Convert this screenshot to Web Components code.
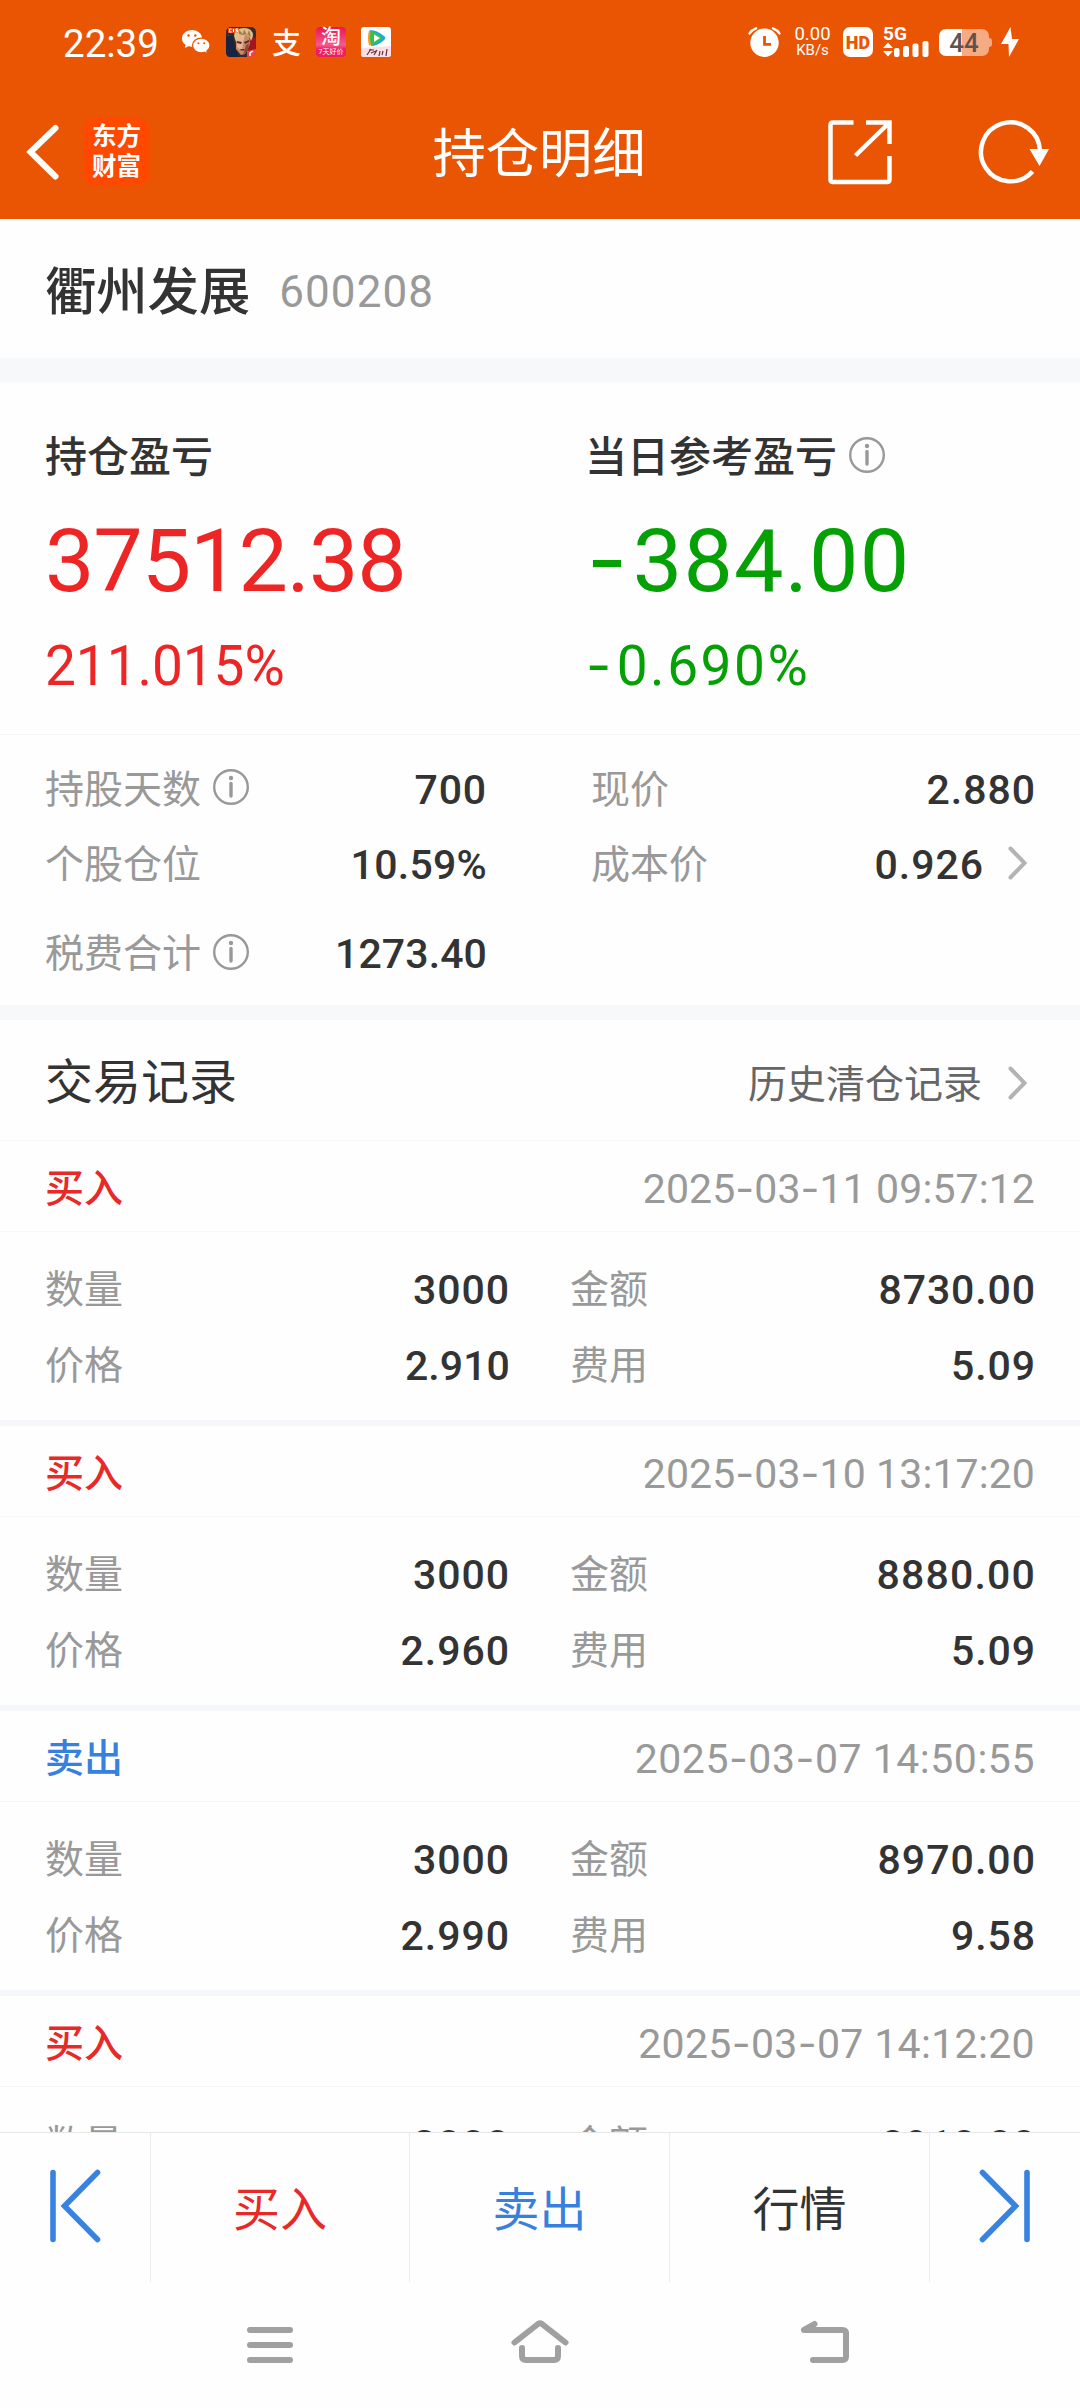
<!DOCTYPE html>
<html lang="zh-CN">
<head>
<meta charset="UTF-8">
<meta name="viewport" content="width=1080">
<title>持仓明细</title>
<style>
  body {
    margin: 0;
    width: 1080px;
    height: 2408px;
    overflow: hidden;
    background: #fefefe;
    color: #333;
    font-family: Roboto, "Noto Sans CJK SC", sans-serif;
  }
</style>
</head>
<body>
<position-page></position-page>

<script>
// the short dash of Roboto is swapped for a wider one in numbers and dates
function num(text) {
  return text.replace(/-/g, '<span class="dash">-</span>');
}
const dashStyle = `.dash { font-family: Inter, sans-serif; line-height: 0; }`;

// Roboto digits all have one width: numbers with many 1s are set tighter
function tracking(text, base) {
  const ones = (text.match(/1/g) || []).length;
  const narrow = (text.match(/[2357]/g) || []).length;
  return (base - (ones * 0.11 + narrow * 0.025) / text.length).toFixed(4) + "em";
}

class StatusBar extends HTMLElement {
  constructor() {
    super();
    this.attachShadow({ mode: "open" }).innerHTML = `
      <style>
        :host {
          display: flex;
          justify-content: space-between;
          align-items: center;
          height: 84px;
          padding: 0 61px 0 63px;
          box-sizing: border-box;
          color: #fff;
        }
        .side { display: flex; align-items: center; }
        .time { font-size: 38.500px; line-height: 46px; padding-top: 4px; width: 97px; }
        svg { display: block; }
        .left svg { margin-left: 15px; }
        .wechat { margin-left: 22px !important; }
        .pay {
          width: 30px;
          margin-left: 16px;
          font-size: 29px;
          line-height: 42px;
          font-weight: 500;
          padding-top: 3px;
        }
        .tile {
          width: 30px;
          height: 30px;
          margin-left: 14px;
          border-radius: 4px;
          text-align: center;
          background: linear-gradient(#e91550, #f65a8c 60%, #ef1d62 74%);
        }
        .tile b { display: block; font-size: 20px; line-height: 21px; font-weight: 500; }
        .tile i { display: block; font-size: 7px; line-height: 8px; font-style: normal; white-space: nowrap; }
        .speed { margin-left: 12px; width: 39px; text-align: center; font-size: 18.500px; line-height: 15px; }
        .speed small { display: block; font-size: 15px; line-height: 15px; padding-top: 1px; }
        .hd {
          width: 30px;
          height: 30px;
          margin-left: 11px;
          border-radius: 7px;
          background: #fff;
          color: #ea5504;
          font-size: 18px;
          font-weight: 900;
          line-height: 31px;
          text-align: center;
        }
        .cell { margin-left: 10px; width: 46px; height: 30px; }
        .cell b { display: block; font-size: 19px; line-height: 14px; font-weight: 700; }
        .battery {
          margin-left: 10px;
          width: 50px;
          height: 27px;
          border-radius: 7px;
          background: linear-gradient(90deg, #fff 46%, #f6ab82 46%);
          color: #5e5350;
          font-size: 26px;
          font-weight: 500;
          line-height: 29px;
          text-align: center;
        }
        .nub { width: 3px; height: 9px; border-radius: 0 4px 4px 0; background: #f6ab82; }
      </style>
      <div class="side left">
        <span class="time">22:39</span>
        <svg class="wechat" width="28" height="26" viewBox="0 0 28 26">
          <path fill="#fff" d="M10 1C4.400 1 0 4.700 0 9.400c0 2.700 1.400 5 3.700 6.500L2.800 19l3.400-1.800c1.200.3 2.500.5 3.800.5 5.600 0 10-3.700 10-8.400S15.600 1 10 1z"/>
          <path fill="#fff" stroke="#ea5504" stroke-width="1.300" d="M19.300 9.200c-4.900 0-8.800 3.200-8.800 7.300s3.900 7.300 8.800 7.300c1.100 0 2.200-.2 3.200-.5l3.300 1.700-.9-2.900c2-1.300 3.200-3.300 3.200-5.600 0-4.100-3.900-7.300-8.800-7.300z"/>
          <g fill="#ea5504"><circle cx="6.500" cy="6.500" r="1.200"/><circle cx="13.300" cy="6.500" r="1.200"/><circle cx="16.400" cy="14.200" r="1"/><circle cx="22.200" cy="14.200" r="1"/></g>
        </svg>
        <svg width="31" height="30" viewBox="0 0 31 30">
          <rect x="1" width="30" height="30" rx="5" fill="#3b2a33"/>
          <path fill="#a31420" d="M21 7l10 4v15l-9 2z"/>
          <path fill="#17233f" d="M1 10l7-2 2 12 4 10H5q-4 0-4-5z"/>
          <path fill="#c98a66" d="M11 7q7-4 13 1l1 9-5 10-4 1-5-6z"/>
          <path fill="#e8b594" d="M12 8q5-3 8 0l-2 8-1 8-5-4z"/>
          <path fill="#dcc08a" d="M9 9q1-8 10-8 9 0 9 8l-2 5-2-5-6-2-4 2-3 6z"/>
          <path fill="#a07c4c" d="M14 3l4 4 1-5 3 6 2-5 2 7-4-3-4 1-4-1z"/>
          <path fill="#5a2a25" d="M12 14l5 1-1 2-4-1zM19 15l5-2v2l-4 2zM15 22h5l-1 1.500h-3z"/>
          <path fill="#8e4a38" d="M21 18l3-2-1 7-5 5z"/>
          <path fill="#e8501c" d="M3 1h11l-1 5H3z"/>
          <path fill="none" stroke="#fff" stroke-width="1" d="M6.500 2H4.500v3h2M8.500 2v3M13 2h-2v1.500h1.500V5h-2"/>
          <path fill="#e74a3c" d="M22 24l9-2v4q0 4-4 4h-5z"/>
          <path fill="none" stroke="#fff" stroke-width="1.500" d="M28 24l-3 2v3"/>
        </svg>
        <span class="pay">支</span>
        <div class="tile"><b>淘</b><i>7天好价</i></div>
        <svg width="30" height="30" viewBox="0 0 30 30">
          <rect width="30" height="30" rx="3" fill="#fff"/>
          <path fill="#1aa5f5" d="M9 3q7 0 14 6 3 2-1 5-6 5-12 5z"/>
          <path fill="#ff9a1f" d="M8 3.500q-2 7 0 15l4-1V5z"/>
          <path fill="#35c24a" d="M9.500 4q6 1 11 6 2 1-.500 3-5 4-10 5-2-7-.500-14z"/>
          <path fill="#fff" d="M13 7.500l6 3.500-6 4z"/>
          <path fill="#fbe0e6" d="M0 21l30-2v8q0 3-3 3H3q-3 0-3-3z"/>
          <path fill="none" stroke="#6b2c3c" stroke-width="1.200" d="M6 28l4-6m-2 1h5m-3 3l5-2m1-1l-3 5m6-4l-1 5m4-5l-1 4m5-6l-1 7"/>
        </svg>
      </div>
      <div class="side">
        <svg width="33" height="30" viewBox="0 0 33 30">
          <circle cx="16.500" cy="15.800" r="14.200" fill="#fff"/>
          <path fill="none" stroke="#fff" stroke-width="2.500" stroke-linecap="round" d="M1.500 6.500Q3.500 3 8 1.300M31.500 6.500Q29.500 3 25 1.300"/>
          <path fill="none" stroke="#ea5504" stroke-width="2.800" d="M16.500 9v8.300h6.500"/>
        </svg>
        <div class="speed">0.00<small>KB/s</small></div>
        <div class="hd">HD</div>
        <div class="cell">
          <b>5G</b>
          <svg width="46" height="16" viewBox="0 0 46 16">
            <g fill="#fff"><path d="M0 7l5-5.500L10 7zM0 10l5 5.500L10 10z"/>
            <rect x="11" y="7" width="5.500" height="9" rx="2"/><rect x="20" y="5" width="6" height="11" rx="2"/>
            <rect x="29.500" y="2.500" width="6" height="13.500" rx="2"/><rect x="39.500" y="0" width="6" height="16" rx="2"/></g>
          </svg>
        </div>
        <div class="battery">44</div><div class="nub"></div>
        <svg style="margin-left: 9px" width="18" height="30" viewBox="0 0 18 30">
          <path fill="#fff" d="M9.500 0L0 17h7.500L8 30l10-18h-7z"/>
        </svg>
      </div>
    `;
  }
}
customElements.define("status-bar", StatusBar);

class TitleBar extends HTMLElement {
  constructor() {
    super();
    this.attachShadow({ mode: "open" }).innerHTML = `
      <style>
        :host {
          display: grid;
          grid-template-columns: 1fr auto 1fr;
          align-items: center;
          height: 135px;
          color: #fff;
        }
        svg { display: block; }
        .left, .right { display: flex; align-items: center; }
        .left { padding-left: 26px; }
        .right { justify-content: flex-end; padding-right: 30px; }
        .logo {
          width: 67px;
          height: 68px;
          margin-left: 23px;
          padding-top: 2px;
          box-sizing: border-box;
          border-radius: 13px;
          background: #ff4800;
          font-family: "Noto Sans CJK SC", sans-serif;
          font-size: 24.500px;
          font-weight: 700;
          line-height: 30px;
          text-align: center;
        }
        h1 { margin: 0 2px 0 0; font-size: 53.300px; line-height: 60px; font-weight: 400; padding-top: 7px; }
      </style>
      <div class="left">
        <svg width="34" height="60" viewBox="0 0 34 60">
          <path fill="none" stroke="#fff" stroke-width="6" stroke-linecap="round" d="M29.500 6L4.500 30l25 24.500"/>
        </svg>
        <div class="logo">东方<br>财富</div>
      </div>
      <h1><slot></slot></h1>
      <div class="right">
        <svg width="66" height="66" viewBox="0 0 66 66">
          <path fill="none" stroke="#fff" stroke-width="4.500" d="M27.500 3.500H7q-2.500 0-2.500 2.500v54.500q0 2.500 2.500 2.500h54q2.500 0 2.500-2.500V37M40 3.500h23.500V25M63 4L29.500 36.500"/>
        </svg>
        <svg style="margin-left: 84px" width="74" height="68" viewBox="0 0 74 68">
          <path fill="none" stroke="#fff" stroke-width="4.500" d="M64 33A29.500 29.500 0 1 0 56.500 53.500"/>
          <path fill="#fff" d="M53.500 31h19.500L63.500 48z"/>
        </svg>
      </div>
    `;
  }
}
customElements.define("title-bar", TitleBar);

class InfoIcon extends HTMLElement {
  constructor() {
    super();
    this.attachShadow({ mode: "open" }).innerHTML = `
      <style>
        :host { display: block; width: 36px; height: 36px; }
        svg { display: block; }
      </style>
      <svg width="36" height="36" viewBox="0 0 36 36">
        <circle cx="18" cy="18" r="16.800" fill="none" stroke="#999" stroke-width="2.400"/>
        <circle cx="18" cy="9" r="2.200" fill="#999"/>
        <path stroke="#999" stroke-width="3.400" stroke-linecap="round" d="M18 14.500v12.500"/>
      </svg>
    `;
  }
}
customElements.define("info-icon", InfoIcon);

class RightArrow extends HTMLElement {
  constructor() {
    super();
    this.attachShadow({ mode: "open" }).innerHTML = `
      <style>
        :host { display: block; width: 20px; height: 34px; }
        svg { display: block; }
      </style>
      <svg width="20" height="34" viewBox="0 0 20 34">
        <path fill="none" stroke="#b3b3b3" stroke-width="4" stroke-linecap="round" d="M2.500 2.500L16.500 17 2.500 31.500"/>
      </svg>
    `;
  }
}
customElements.define("right-arrow", RightArrow);

class StockName extends HTMLElement {
  constructor() {
    super();
    this.attachShadow({ mode: "open" });
  }

  connectedCallback() {
    this.shadowRoot.innerHTML = `
      <style>
        :host {
          display: flex;
          align-items: center;
          height: 139px;
          padding: 6px 45px 0;
          box-sizing: border-box;
        }
        .name { font-size: 51.300px; font-weight: 500; line-height: 60px; padding-top: 2px; }
        .code { margin-left: 29px; font-size: 44px; line-height: 60px; color: #999; letter-spacing: 1.100px; }
      </style>
      <span class="name"><slot></slot></span>
      <span class="code">${this.getAttribute("code")}</span>
    `;
  }
}
customElements.define("stock-name", StockName);

class ProfitCell extends HTMLElement {
  constructor() {
    super();
    this.attachShadow({ mode: "open" });
  }

  connectedCallback() {
    const value = this.getAttribute("value");
    const rate = this.getAttribute("rate");
    this.shadowRoot.innerHTML = `
      <style>
        ${dashStyle}
        :host { display: block; padding-top: 45px; white-space: nowrap; }
        .head { display: flex; align-items: center; height: 60px; font-size: 42px; line-height: 58px; font-weight: 500; }
        .head span { padding-top: 2px; }
        info-icon { margin: -4px 0 0 12px; }
        .value, .rate { color: ${this.getAttribute("color")}; }
        .value {
          margin-top: 14px;
          font-size: 88px;
          line-height: 120px;
          letter-spacing: ${tracking(value, 0.017)};
        }
        .rate { margin-top: 15px; font-size: 55px; line-height: 60px; letter-spacing: ${tracking(rate, 0.046)}; }
        .dash { margin: 0 .05em 0 .02em; }
      </style>
      <div class="head"><span><slot></slot></span>${this.hasAttribute("info") ? "<info-icon></info-icon>" : ""}</div>
      <div class="value">${num(value)}</div>
      <div class="rate">${num(rate)}</div>
    `;
  }
}
customElements.define("profit-cell", ProfitCell);

// label on the left, number on the right
class StatItem extends HTMLElement {
  constructor() {
    super();
    this.attachShadow({ mode: "open" });
  }

  connectedCallback() {
    const value = this.getAttribute("value");
    this.shadowRoot.innerHTML = `
      <style>
        :host { display: flex; align-items: center; white-space: nowrap; }
        .label { font-size: 39px; line-height: 60px; color: #999; padding-top: 2px; }
        .value {
          margin-left: auto;
          font-size: 41px;
          line-height: 60px;
          font-weight: 500;
          letter-spacing: ${tracking(value, 0.029)};
          padding-top: 2px;
        }
        info-icon { margin: -3px 0 0 12px; }
        right-arrow { margin: -2px 8px 0 24px; }
      </style>
      <span class="label"><slot></slot></span>
      ${this.hasAttribute("info") ? "<info-icon></info-icon>" : ""}
      <span class="value">${value}</span>
      ${this.hasAttribute("arrow") ? "<right-arrow></right-arrow>" : ""}
    `;
  }
}
customElements.define("stat-item", StatItem);

class TradeRecord extends HTMLElement {
  constructor() {
    super();
    this.attachShadow({ mode: "open" });
  }

  set record(record) {
    this._record = record;
    this.render();
  }

  render() {
    const { side, time, count, amount, price, fee } = this._record;
    this.shadowRoot.innerHTML = `
      <style>
        ${dashStyle}
        :host { display: block; height: 279px; flex: none; border-bottom: 6px solid #f6f7fa; }
        .head {
          display: flex;
          justify-content: space-between;
          align-items: center;
          height: 91px;
          padding: 6px 45px 0;
          box-sizing: border-box;
          border-bottom: 1px solid #f5f6f8;
          line-height: 60px;
        }
        .side { font-size: 39px; font-weight: 500; color: ${side === "买入" ? "#e92828" : "#3880de"}; }
        .time { font-size: 41px; color: #999; letter-spacing: ${tracking(time, 0.029)}; }
        .body {
          display: grid;
          grid-template-columns: 465px 466px;
          grid-auto-rows: 76px;
          column-gap: 60px;
          padding: 19px 44px 0 45px;
        }
      </style>
      <div class="head">
        <span class="side">${side}</span>
        <span class="time">${num(time)}</span>
      </div>
      <div class="body">
        <stat-item value="${count}">数量</stat-item>
        <stat-item value="${amount}">金额</stat-item>
        <stat-item value="${price}">价格</stat-item>
        <stat-item value="${fee}">费用</stat-item>
      </div>
    `;
  }
}
customElements.define("trade-record", TradeRecord);

class ActionBar extends HTMLElement {
  constructor() {
    super();
    this.attachShadow({ mode: "open" }).innerHTML = `
      <style>
        :host {
          display: grid;
          grid-template-columns: 151px 259px 260px 260px 150px;
          height: 150px;
          box-sizing: border-box;
          border-top: 1px solid #e8e8e8;
          font-size: 47px;
          line-height: 64px;
        }
        div {
          display: flex;
          align-items: center;
          justify-content: center;
          padding-top: 5px;
          border-right: 1px solid #ececec;
        }
        div:last-child { border-right: 0; }
        .arrow { padding: 0 0 3px; }
        .buy { color: #e92828; }
        .sell { color: #3880de; }
      </style>
      <div class="arrow">
        <svg width="52" height="76" viewBox="0 0 52 76">
          <path fill="none" stroke="#3882e0" stroke-width="5.600" stroke-linecap="round" d="M4 4.500V71.500M48.500 4.500L15.500 38l33 33.500"/>
        </svg>
      </div>
      <div class="buy">买入</div>
      <div class="sell">卖出</div>
      <div>行情</div>
      <div class="arrow">
        <svg width="52" height="76" viewBox="0 0 52 76">
          <path fill="none" stroke="#3882e0" stroke-width="5.600" stroke-linecap="round" d="M48 4.500V71.500M3.500 4.500L36.500 38l-33 33.500"/>
        </svg>
      </div>
    `;
  }
}
customElements.define("action-bar", ActionBar);

class SystemNav extends HTMLElement {
  constructor() {
    super();
    this.attachShadow({ mode: "open" }).innerHTML = `
      <style>
        :host {
          display: grid;
          grid-template-columns: 265px 289px auto;
          align-items: center;
          height: 126px;
          padding-left: 245px;
          box-sizing: border-box;
        }
        svg { fill: none; stroke: #a0a0a0; stroke-width: 6; stroke-linecap: round; stroke-linejoin: round; }
      </style>
      <svg width="50" height="50" viewBox="0 0 50 50"><path d="M5 10h40M5 25h40M5 40h40"/></svg>
      <svg width="60" height="50" viewBox="0 0 60 50"><path d="M4.500 22.500L28 4q2-1.300 4 0l23.500 18.500M12 28v8q0 4 4 4h28q4 0 4-4v-8"/></svg>
      <svg width="52" height="50" viewBox="0 0 52 50"><path d="M15.500 4L5 10h38.500q3.500 0 3.500 3.500v23q0 3.500-3.500 3.500H14"/><path d="M6 9.500l8-4-2 4z"/></svg>
    `;
  }
}
customElements.define("system-nav", SystemNav);

const records = [
  { side: "买入", time: "2025-03-11 09:57:12", count: "3000", amount: "8730.00", price: "2.910", fee: "5.09" },
  { side: "买入", time: "2025-03-10 13:17:20", count: "3000", amount: "8880.00", price: "2.960", fee: "5.09" },
  { side: "卖出", time: "2025-03-07 14:50:55", count: "3000", amount: "8970.00", price: "2.990", fee: "9.58" },
  { side: "买入", time: "2025-03-07 14:12:20", count: "3000", amount: "8910.00", price: "2.970", fee: "5.09" },
];

class PositionPage extends HTMLElement {
  constructor() {
    super();
    this.attachShadow({ mode: "open" }).innerHTML = `
      <style>
        :host { display: flex; flex-direction: column; width: 1080px; height: 2408px; }
        header { background: #ea5504; }
        .gap { height: 24px; background: #f6f8fa; }
        .gap.small { height: 15px; }
        .profit {
          display: grid;
          grid-template-columns: 540px 1fr;
          height: 353px;
          padding: 0 0 0 45px;
          box-sizing: border-box;
          border-bottom: 1px solid #f5f6f8;
        }
        .stats {
          display: grid;
          grid-template-columns: 442px 445px;
          grid-template-rows: 75px 75px 104px;
          column-gap: 104px;
          height: 270px;
          padding: 16px 44px 0 45px;
          box-sizing: border-box;
        }
        .bar {
          display: flex;
          align-items: center;
          height: 121px;
          padding: 5px 52px 0 45px;
          box-sizing: border-box;
          border-bottom: 1px solid #f5f6f8;
          line-height: 60px;
        }
        .bar h2 { margin: 0; font-size: 48px; font-weight: 400; }
        .bar a { margin: 0 26px 0 auto; font-size: 39px; color: #666; padding-top: 4px; }
        .list { flex: 1; min-height: 0; display: flex; flex-direction: column; overflow: hidden; }
      </style>
      <header>
        <status-bar></status-bar>
        <title-bar>持仓明细</title-bar>
      </header>
      <stock-name code="600208">衢州发展</stock-name>
      <div class="gap"></div>
      <section class="profit">
        <profit-cell value="37512.38" rate="211.015%" color="#ee2525">持仓盈亏</profit-cell>
        <profit-cell value="-384.00" rate="-0.690%" color="#04a004" info>当日参考盈亏</profit-cell>
      </section>
      <section class="stats">
        <stat-item value="700" info>持股天数</stat-item>
        <stat-item value="2.880">现价</stat-item>
        <stat-item value="10.59%">个股仓位</stat-item>
        <stat-item value="0.926" arrow>成本价</stat-item>
        <stat-item value="1273.40" info>税费合计</stat-item>
      </section>
      <div class="gap small"></div>
      <div class="bar">
        <h2>交易记录</h2>
        <a>历史清仓记录</a>
        <right-arrow></right-arrow>
      </div>
      <div class="list"></div>
      <action-bar></action-bar>
      <system-nav></system-nav>
    `;
    const list = this.shadowRoot.querySelector(".list");
    records.forEach((record) => {
      const item = document.createElement("trade-record");
      item.record = record;
      list.appendChild(item);
    });
  }
}
customElements.define("position-page", PositionPage);
</script>
</body>
</html>
